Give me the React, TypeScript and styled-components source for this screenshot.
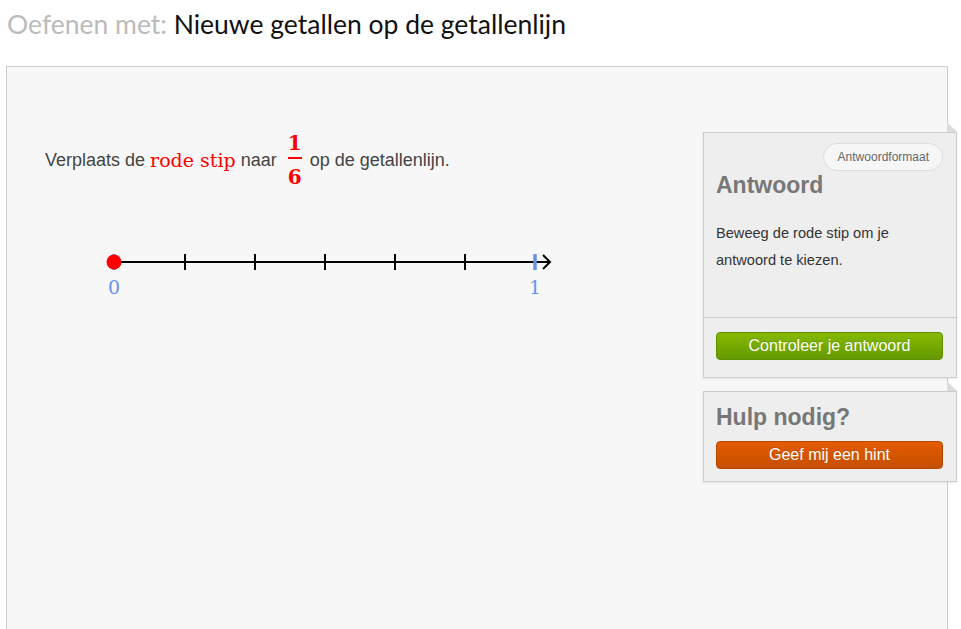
import React from "react";
import styled, { createGlobalStyle } from "styled-components";

const Global = createGlobalStyle`
  html, body { margin: 0; padding: 0; background: #ffffff; overflow: hidden; }
  body { font-family: "Liberation Sans", Arial, sans-serif; }
`;

const Page = styled.div`
  width: 961px;
  height: 629px;
  overflow: hidden;
`;

const Title = styled.h1`
  margin: 7px 0 0 7px;
  font-family: Lato, "Open Sans", sans-serif;
  font-weight: 400;
  font-size: 26.5px;
  line-height: 34px;
  color: #111;
`;

const Muted = styled.span`
  color: #bbbbbb;
`;

const Panel = styled.div`
  box-sizing: border-box;
  margin: 25px 0 0 6px;
  width: 942px;
  height: 620px;
  background: #f7f7f7;
  border: 1px solid #cccccc;
  display: flex;
  justify-content: space-between;
`;

const Problem = styled.div`
  padding: 63px 0 0 38px;
  display: flex;
  flex-direction: column;
`;

const Question = styled.div`
  display: flex;
  align-items: center;
  height: 60px;
  font-size: 18px;
  color: #444444;
  white-space: pre;
`;

const MathText = styled.span`
  font-family: "DejaVu Serif", "Liberation Serif", serif;
  font-size: 19px;
  color: #ff0000;
`;

const Fraction = styled.span`
  display: inline-flex;
  flex-direction: column;
  align-items: center;
  margin: 0 8px 0 6px;
  font-family: "DejaVu Serif", "Liberation Serif", serif;
  font-weight: 700;
  font-size: 20px;
  line-height: 24px;
  color: #ff0000;
`;

const FracBar = styled.span`
  display: block;
  width: 14px;
  height: 2px;
  margin: 2px 0 6px;
  background: #ff0000;
`;

const LineWrap = styled.div`
  margin: 55px 0 0 55px;
`;

const Sidebar = styled.div`
  margin: 65px -10px 0 0;
  display: flex;
  flex-direction: column;
  gap: 13px;
  width: 254px;
`;

const Card = styled.div`
  position: relative;
  box-sizing: border-box;
  width: 254px;
  background: #eeeeee;
  border: 1px solid #cccccc;
  box-shadow: 0 1px 2px rgba(0, 0, 0, 0.08);

  &::before {
    content: "";
    position: absolute;
    top: -11px;
    right: -1px;
    width: 0;
    height: 0;
    border-left: 10px solid #dcdcdc;
    border-top: 10px solid transparent;
  }
`;

const CardBody = styled.div`
  padding: 10px 13px 0 12px;
  height: 184px;
  box-sizing: border-box;
`;

const PillRow = styled.div`
  display: flex;
  justify-content: flex-end;
`;

const Pill = styled.span`
  box-sizing: border-box;
  height: 28px;
  padding: 0 13px 0 14px;
  border: 1px solid #dddddd;
  border-radius: 14px;
  background: #f6f6f6;
  font-size: 12px;
  line-height: 26px;
  color: #666666;
`;

const CardTitle = styled.h2`
  margin: 0;
  font-size: 23px;
  line-height: 28px;
  font-weight: 700;
  color: #777777;
`;

const Hint = styled.p`
  margin: 21px 0 0;
  font-size: 14.6px;
  line-height: 27px;
  color: #333333;
`;

const CardFooter = styled.div`
  border-top: 1px solid #cccccc;
  padding: 14px 13px 17px 12px;
`;

const HelpBody = styled.div`
  padding: 11px 13px 12px 12px;
  display: flex;
  flex-direction: column;
  gap: 10px;
`;

const Button = styled.button<{ $tone: "green" | "orange" }>`
  display: block;
  box-sizing: border-box;
  width: 100%;
  height: 28px;
  border-radius: 4px;
  border: 1px solid ${(p) => (p.$tone === "green" ? "#5f8f00" : "#b84800")};
  background: ${(p) =>
    p.$tone === "green"
      ? "linear-gradient(#86b900, #649a00)"
      : "linear-gradient(#e35c00, #c64f00)"};
  color: #ffffff;
  font-family: "Liberation Sans", Arial, sans-serif;
  font-size: 16px;
  line-height: 24px;
  padding: 0;
  text-shadow: 0 -1px 0 rgba(0, 0, 0, 0.15);
  cursor: pointer;
`;

const ticks = [85, 155, 225, 295, 365];

function NumberLine() {
  return (
    <svg width="460" height="56" viewBox="0 0 460 56">
      <line x1="14" y1="17" x2="450" y2="17" stroke="#000" strokeWidth="2" />
      <polyline points="443,10 450,17 443,24" fill="none" stroke="#000" strokeWidth="2" />
      {ticks.map((x) => (
        <line key={x} x1={x} y1="9" x2={x} y2="25" stroke="#000" strokeWidth="2" />
      ))}
      <line x1="14" y1="9" x2="14" y2="25" stroke="#6495ed" strokeWidth="3.5" />
      <line x1="435" y1="9" x2="435" y2="25" stroke="#6495ed" strokeWidth="3.5" />
      <circle cx="14" cy="17" r="7.5" fill="#ff0000" />
      <text x="14" y="49" textAnchor="middle" fontFamily="DejaVu Serif, Liberation Serif, serif" fontSize="19" fill="#6495ed">0</text>
      <text x="435" y="49" textAnchor="middle" fontFamily="DejaVu Serif, Liberation Serif, serif" fontSize="19" fill="#6495ed">1</text>
    </svg>
  );
}

export default function App() {
  return (
    <Page>
      <Global />
      <Title>
        <Muted>Oefenen met: </Muted>Nieuwe getallen op de getallenlijn
      </Title>
      <Panel>
        <Problem>
          <Question>
            {"Verplaats de "}
            <MathText>rode stip</MathText>
            {" naar "}
            <Fraction>
              <span>1</span>
              <FracBar />
              <span>6</span>
            </Fraction>
            {"op de getallenlijn."}
          </Question>
          <LineWrap>
            <NumberLine />
          </LineWrap>
        </Problem>
        <Sidebar>
          <Card>
            <CardBody>
              <PillRow>
                <Pill>Antwoordformaat</Pill>
              </PillRow>
              <CardTitle>Antwoord</CardTitle>
              <Hint>
                Beweeg de rode stip om je
                <br />
                antwoord te kiezen.
              </Hint>
            </CardBody>
            <CardFooter>
              <Button $tone="green">Controleer je antwoord</Button>
            </CardFooter>
          </Card>
          <Card>
            <HelpBody>
              <CardTitle>Hulp nodig?</CardTitle>
              <Button $tone="orange">Geef mij een hint</Button>
            </HelpBody>
          </Card>
        </Sidebar>
      </Panel>
    </Page>
  );
}
